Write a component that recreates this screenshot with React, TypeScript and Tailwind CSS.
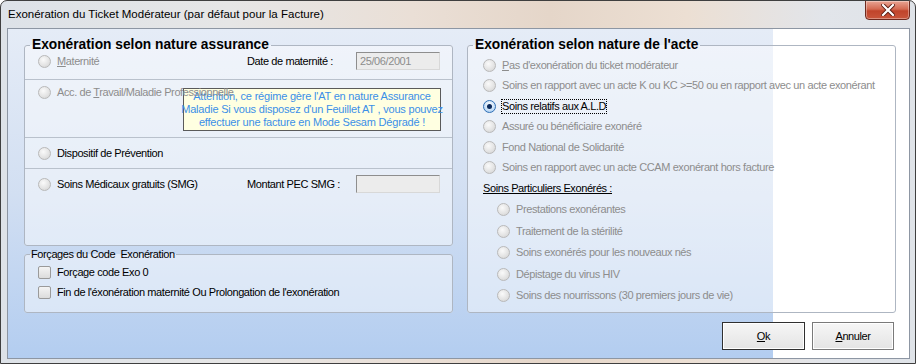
import React from 'react';

const font = { fontFamily: '"Liberation Sans", Arial, sans-serif' };

function Radio({ checked = false }: { checked?: boolean }) {
  if (checked) {
    return (
      <span className="flex h-[13px] w-[13px] shrink-0 items-center justify-center rounded-full border border-[#2f6fb4] bg-[radial-gradient(circle_at_50%_35%,#ffffff,#bcd9f6_70%,#8fbde9)]">
        <span className="h-[5px] w-[5px] rounded-full bg-[#0a2a5c]" />
      </span>
    );
  }
  return (
    <span className="block h-[13px] w-[13px] shrink-0 rounded-full border border-[#b9b9b9] bg-[radial-gradient(circle_at_40%_35%,#fafafa,#e2e2e2_60%,#cfcfcf)]" />
  );
}

function Checkbox() {
  return (
    <span className="block h-[13px] w-[13px] shrink-0 rounded-[2px] border border-[#9a9a9a] bg-[linear-gradient(to_bottom,#f4f4f4,#dcdcdc)]" />
  );
}

function RadioRow({
  label,
  disabled = true,
  checked = false,
  focus = false,
  indent = 'pl-[15px]',
  h = 'h-[20.5px]',
}: {
  label: React.ReactNode;
  disabled?: boolean;
  checked?: boolean;
  focus?: boolean;
  indent?: string;
  h?: string;
}) {
  return (
    <div className={`flex items-center gap-[6px] ${indent} ${h}`}>
      <Radio checked={checked} />
      <span
        className={`${disabled ? 'text-[#8d8d8d]' : 'text-black'} ${
          focus ? 'outline outline-1 outline-dotted outline-black' : ''
        } leading-[13px] whitespace-nowrap`}
      >
        {label}
      </span>
    </div>
  );
}

function TextBox({ value = '' }: { value?: string }) {
  return (
    <div className="flex h-[18px] w-[84px] items-center border border-[#8e8e8e] border-b-[#d8d8d8] border-r-[#d8d8d8] bg-[#ececec] pl-[3px] text-[#8d8d8d]">
      {value}
    </div>
  );
}

export default function App() {
  return (
    <div
      style={font}
      className="relative h-[364px] w-[916px] overflow-hidden rounded-t-[7px] border border-[#3f3f3f] bg-[linear-gradient(to_right,#dde2e8_0%,#e6e6e6_25%,#eadfd6_45%,#e5d6c9_60%,#ecdfd3_75%,#e2e5ea_90%,#dfe3e8_100%)] text-[11px] tracking-[-0.4px]"
    >
      {/* Title bar */}
      <div className="flex h-[27px] items-center pl-[7px] text-[11.5px] tracking-normal text-black">
        Exonération du Ticket Modérateur (par défaut pour la Facture)
      </div>
      <div className="absolute right-[5px] top-[-1px] flex h-[20px] w-[45px] items-center justify-center rounded-b-[4px] border border-[#6e2a1f] bg-[linear-gradient(to_bottom,#e9a594_0%,#d46a52_45%,#c0442b_55%,#c9553b_100%)] shadow-[inset_0_0_0_1px_rgba(255,255,255,0.35)]">
        <svg width="14" height="12" viewBox="0 0 14 12">
          <path
            d="M2 1 L12 11 M12 1 L2 11"
            stroke="#5a1c12"
            strokeWidth="4"
            strokeLinecap="square"
          />
          <path d="M2 1 L12 11 M12 1 L2 11" stroke="#ffffff" strokeWidth="2.2" strokeLinecap="square" />
        </svg>
      </div>

      {/* Client area */}
      <div className="ml-[6px] h-[331px] w-[903px] border border-[#8d96a3] bg-white bg-[linear-gradient(to_bottom,#e5ecf7_0%,#d2dff2_50%,#b3cdf0_100%)] bg-[length:765px_100%] bg-no-repeat text-black">
        <div className="flex gap-[14px] pl-[16px] pr-[13px] pt-[9px]">
          {/* Left column */}
          <div className="flex w-[429px] shrink-0 flex-col gap-[2px]">
            <fieldset className="h-[208px] rounded-[3px] border border-[#aeb6c2] bg-white/45 p-0">
              <legend className="ml-[5px] px-[2px] text-[13.75px] font-bold leading-[14px] tracking-normal">
                Exonération selon nature assurance
              </legend>
              {/* Maternité */}
              <div className="-mt-[1px] flex h-[29px] items-start border-b border-[#b9c1cc]">
                <div className="flex h-[20px] w-[222px] items-center gap-[6px] pl-[13px]">
                  <Radio />
                  <span className="text-[#8d8d8d]">
                    <u>M</u>aternité
                  </span>
                </div>
                <div className="flex h-[20px] w-[109px] items-center">Date de maternité :</div>
                <div className="pt-[1px]">
                  <TextBox value="25/06/2001" />
                </div>
              </div>
              {/* Accident du travail */}
              <div className="relative h-[56px] border-b border-[#b9c1cc]">
                <div className="relative z-10 mt-[2px] flex h-[20px] items-center gap-[6px] pl-[13px]">
                  <Radio />
                  <span className="text-[#8d8d8d]">
                    Acc. de <u>T</u>ravail/Maladie Professionnelle
                  </span>
                </div>
                <div className="absolute left-[158px] top-[6px] flex h-[43px] w-[258px] flex-col items-center justify-center whitespace-nowrap border border-[#5a5a5a] bg-[#ffffe1] text-center leading-[13px] tracking-[-0.2px] text-[#3b8fe8]">
                  <span>Attention, ce régime gère l'AT en nature Assurance</span>
                  <span>Maladie Si vous disposez d'un Feuillet AT , vous pouvez</span>
                  <span>effectuer une facture en Mode Sesam Dégradé !</span>
                </div>
              </div>
              {/* Dispositif */}
              <div className="flex h-[31px] items-center gap-[6px] border-b border-[#b9c1cc] pl-[13px]">
                <Radio />
                <span>Dispositif de Prévention</span>
              </div>
              {/* SMG */}
              <div className="flex items-start pt-[5px]">
                <div className="flex h-[20px] w-[222px] items-center gap-[6px] pl-[13px]">
                  <Radio />
                  <span>Soins Médicaux gratuits (SMG)</span>
                </div>
                <div className="flex h-[20px] w-[109px] items-center">Montant PEC SMG :</div>
                <div className="pt-[1px]">
                  <TextBox />
                </div>
              </div>
            </fieldset>

            <fieldset className="h-[65px] rounded-[3px] border border-[#aeb6c2] bg-white/45 p-0">
              <legend className="ml-[5px] px-[1px] leading-[13px]">Forçages du Code&nbsp; Exonération</legend>
              <div className="mt-[1px] flex h-[20px] items-center gap-[6px] pl-[13px]">
                <Checkbox />
                <span>Forçage code Exo 0</span>
              </div>
              <div className="flex h-[20px] items-center gap-[6px] pl-[13px]">
                <Checkbox />
                <span>Fin de l'éxonération maternité Ou Prolongation de l'exonération</span>
              </div>
            </fieldset>
          </div>

          {/* Right column */}
          <fieldset className="h-[275px] w-[429px] shrink-0 rounded-[3px] border border-[#aeb6c2] bg-white/45 p-0">
            <legend className="ml-[5px] px-[2px] text-[13.75px] font-bold leading-[14px] tracking-normal">
              Exonération selon nature de l'acte
            </legend>
            <div className="pt-[3px]">
              <RadioRow
                label={
                  <>
                    <u>P</u>as d'exonération du ticket modérateur
                  </>
                }
              />
              <RadioRow label="Soins en rapport avec un acte K ou KC >=50 ou en rapport avec un acte exonérant" />
              <RadioRow label="Soins relatifs aux A.L.D" disabled={false} checked focus />
              <RadioRow label="Assuré ou bénéficiaire exonéré" />
              <RadioRow label="Fond National de Solidarité" />
              <RadioRow label="Soins en rapport avec un acte CCAM exonérant hors facture" />
              <div className="flex h-[21px] items-center pl-[15px]">
                <span className="underline">Soins Particuliers Exonérés :</span>
              </div>
              <RadioRow indent="pl-[29px]" h="h-[21.5px]" label="Prestations exonérantes" />
              <RadioRow indent="pl-[29px]" h="h-[21.5px]" label="Traitement de la stérilité" />
              <RadioRow indent="pl-[29px]" h="h-[21.5px]" label="Soins exonérés pour les nouveaux nés" />
              <RadioRow indent="pl-[29px]" h="h-[21.5px]" label="Dépistage du virus HIV" />
              <RadioRow indent="pl-[29px]" h="h-[21.5px]" label="Soins des nourrissons (30 premiers jours de vie)" />
            </div>
          </fieldset>
        </div>

        {/* Buttons */}
        <div className="mt-[9px] flex justify-end gap-[7px] pr-[15px]">
          <button className="flex h-[28px] w-[83px] items-center justify-center border border-[#303030] bg-[linear-gradient(to_bottom,#f6f6f6,#e4e4e4)] shadow-[inset_0_0_0_1px_#ffffff]">
            <span>
              <u>O</u>k
            </span>
          </button>
          <button className="flex h-[28px] w-[82px] items-center justify-center border border-[#7a7a7a] bg-[linear-gradient(to_bottom,#f6f6f6,#e4e4e4)] shadow-[inset_0_0_0_1px_#ffffff]">
            <span>
              <u>A</u>nnuler
            </span>
          </button>
        </div>
      </div>
    </div>
  );
}
